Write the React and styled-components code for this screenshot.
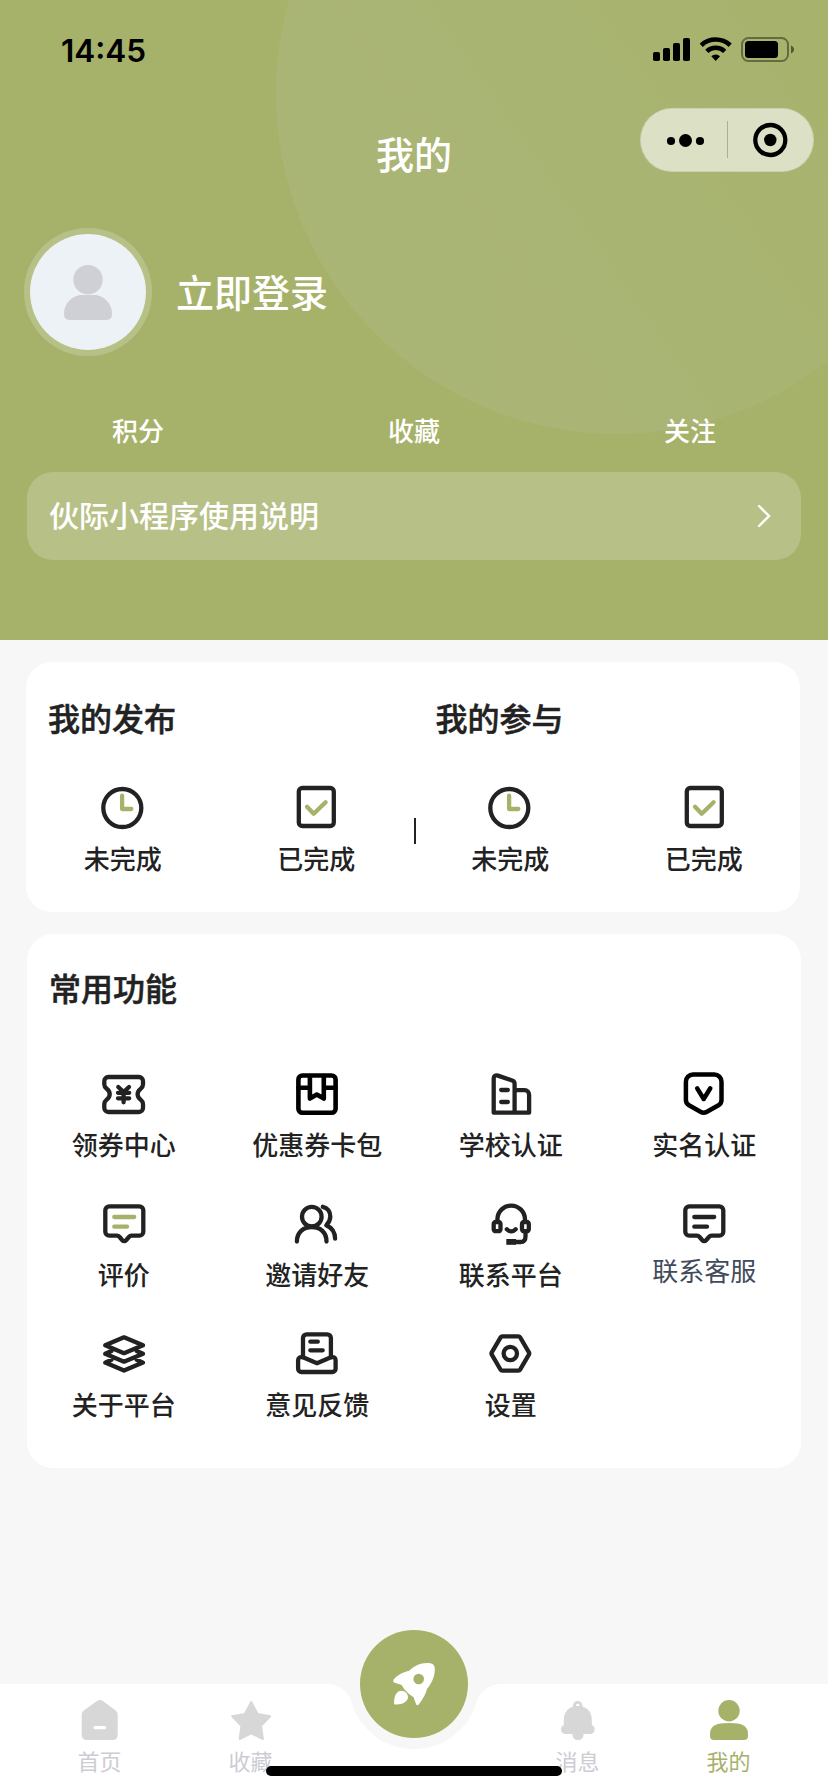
import React from 'react';
import styled, { createGlobalStyle } from 'styled-components';

const GREEN = '#a6b26a';
const INK = '#222222';

const GlobalStyle = createGlobalStyle`
  * {
    box-sizing: border-box;
  }
  body {
    margin: 0;
    background: #f7f7f7;
    font-family: 'Noto Sans CJK SC', 'Noto Sans', sans-serif;
  }
  svg {
    display: block;
  }
`;

const Page = styled.div`
  position: relative;
  width: 828px;
  height: 1792px;
  display: flex;
  flex-direction: column;
  overflow: hidden;
  background: #f7f7f7;
`;

const Header = styled.header`
  position: relative;
  height: 640px;
  flex: none;
  overflow: hidden;
  background: ${GREEN};
  color: #ffffff;
`;

const Halo = styled.div`
  position: absolute;
  left: 276px;
  top: -248px;
  width: 682px;
  height: 682px;
  border-radius: 50%;
  background: linear-gradient(55deg, rgba(180, 190, 150, 0.26) 30%, rgba(180, 190, 150, 0) 82%);
`;

const HeaderContent = styled.div`
  position: relative;
`;

const StatusBar = styled.div`
  height: 108px;
  display: flex;
  justify-content: space-between;
  padding: 30px 34px 0 61px;
`;

const Clock = styled.span`
  font-family: Inter, sans-serif;
  font-size: 31.5px;
  font-weight: 600;
  line-height: 41px;
  color: #000000;
`;

const StatusIcons = styled.div`
  display: flex;
  padding-top: 6px;
`;

const NavBar = styled.div`
  height: 88px;
  display: grid;
  grid-template-columns: 1fr auto 1fr;
  padding: 0 14px;
`;

const NavTitle = styled.h1`
  grid-column: 2;
  margin: 0;
  font-size: 38px;
  font-weight: 500;
  line-height: 89px;
`;

const Capsule = styled.div`
  justify-self: end;
  width: 174px;
  height: 64px;
  border: 1px solid rgba(190, 200, 160, 0.6);
  border-radius: 32px;
  background: rgba(255, 255, 255, 0.6);
`;

const Profile = styled.div`
  display: flex;
  align-items: center;
  gap: 24px;
  margin-top: 32px;
  padding-left: 24px;
`;

const Avatar = styled.div`
  width: 128px;
  height: 128px;
  border: 6px solid rgba(255, 255, 255, 0.2);
  border-radius: 50%;
  background: #edf2f7;
  background-clip: padding-box;
`;

const LoginText = styled.span`
  font-size: 38px;
  font-weight: 500;
  line-height: 56px;
  padding-bottom: 3px;
`;

const Stats = styled.div`
  display: grid;
  grid-template-columns: repeat(3, 1fr);
  margin: 56px 0 24px;
`;

const Stat = styled.span`
  font-size: 26px;
  font-weight: 500;
  line-height: 36px;
  text-align: center;
`;

const Banner = styled.div`
  display: flex;
  align-items: center;
  justify-content: space-between;
  height: 88px;
  margin: 0 27px;
  padding: 0 30px 0 22px;
  border-radius: 26px;
  background: rgba(255, 255, 255, 0.2);
  font-size: 30px;
  font-weight: 500;
`;

const BannerText = styled.span`
  line-height: 40px;
  padding-bottom: 4px;
`;

const Card = styled.section`
  flex: none;
  width: 774px;
  border-radius: 26px;
  background: #ffffff;
`;

const OrdersCard = styled(Card)`
  display: flex;
  height: 250px;
  margin: 22px 0 0 26px;
`;

const OrdersGroup = styled.div`
  flex: 0 0 387.5px;
  padding-top: 33px;
`;

const Divider = styled.div`
  flex: none;
  width: 2.5px;
  height: 26px;
  margin: 156px -2.5px 0 0;
  background: #222222;
`;

const FeaturesCard = styled(Card)`
  height: 534px;
  margin: 22px 0 0 27px;
  padding-top: 31px;
`;

const CardTitle = styled.h2`
  margin: 0 0 ${(props) => props.$gap}px;
  padding-left: 22px;
  font-size: 32px;
  font-weight: 500;
  line-height: 44px;
  color: ${INK};
  -webkit-text-stroke: 0.5px ${INK};
`;

const EntryGrid = styled.div`
  display: grid;
  grid-template-columns: repeat(${(props) => props.$columns}, 193.5px);
  grid-auto-rows: 130px;
`;

const Entry = styled.div`
  display: flex;
  flex-direction: column;
  align-items: center;
`;

const EntryLabel = styled.span`
  margin-top: ${(props) => (props.$plain ? 4 : 8)}px;
  font-size: 26px;
  font-weight: ${(props) => (props.$plain ? 400 : 500)};
  line-height: 36px;
  color: ${(props) => (props.$plain ? '#414b5c' : INK)};
`;

const TabBar = styled.nav`
  position: relative;
  display: flex;
  justify-content: space-between;
  height: 108px;
  margin-top: auto;
  padding: 14px 24px 0;

  &::before {
    content: '';
    position: absolute;
    inset: 0;
    background: #ffffff;
    clip-path: path('M0 0H327A25.7 25.7 0 0 1 351.6 18.4A65 65 0 0 0 476.4 18.4A25.7 25.7 0 0 1 501 0H828V108H0Z');
  }
`;

const TabGroup = styled.div`
  position: relative;
  display: flex;
`;

const Tab = styled.div`
  display: flex;
  flex-direction: column;
  align-items: center;
  gap: 3px;
  width: 151px;
  font-size: 22px;
  line-height: 30px;
  color: ${(props) => (props.$active ? GREEN : '#cbccd4')};
`;

const PublishButton = styled.button`
  position: absolute;
  left: 360px;
  top: -54px;
  width: 108px;
  height: 108px;
  padding: 30px;
  border: none;
  border-radius: 50%;
  background: ${GREEN};
`;

const HomeIndicator = styled.div`
  position: absolute;
  left: 266px;
  bottom: 16px;
  width: 296px;
  height: 10px;
  border-radius: 5px;
  background: #000000;
`;

const LineIcon = ({ color = INK, width = 4.3, children }) => (
  <svg
    width="48"
    height="48"
    viewBox="0 0 48 48"
    fill="none"
    stroke={color}
    strokeWidth={width}
    strokeLinecap="round"
    strokeLinejoin="round"
  >
    {children}
  </svg>
);

const ClockIcon = () => (
  <LineIcon>
    <circle cx="23.3" cy="24" r="19" />
    <path d="M23.100 11.700V25H32.300" stroke={GREEN} />
  </LineIcon>
);

const DoneIcon = () => (
  <LineIcon>
    <rect x="6.800" y="4" width="35" height="38" rx="3.500" />
    <path d="M15 22.700L21.700 29.800L33.600 18.200" stroke={GREEN} />
  </LineIcon>
);

const CouponIcon = () => (
  <LineIcon>
    <path d="M8.300 7H39a4 4 0 0 1 4 4v3.500c0 2-.8 3-2.400 4.300C38.600 20.400 37.600 22 37.600 24.200s1 3.800 3 5.400c1.600 1.300 2.400 2.300 2.400 4.300V38a4 4 0 0 1-4 4H8.300a4 4 0 0 1-4-4v-4.100c0-2 .8-3 2.400-4.300c2-1.600 3-3.200 3-5.400s-1-3.800-3-5.400C5.100 17.500 4.300 16.500 4.300 14.500V11a4 4 0 0 1 4-4z" />
    <path d="M18.300 17L23.700 22L29 17M18 22.800H29.200M18 28.300H29.200M23.600 22V32.300" />
  </LineIcon>
);

const WalletIcon = () => (
  <LineIcon color="#000000" width={4.600}>
    <rect x="5.400" y="5.500" width="37.200" height="37.200" rx="4" />
    <path d="M16.900 6V28.600L23.800 24.600L30.800 28.600V6M5.400 17.700H16.900M30.800 17.700H42.600" />
  </LineIcon>
);

const SchoolIcon = () => (
  <LineIcon>
    <path d="M6.700 42.700V8.500c0-2.500 1.900-3.700 4.200-2.900L25.200 10.500c1.700.6 2.400 1.600 2.400 3.300V42.700M27.600 20.200H37.600a4.500 4.500 0 0 1 4.500 4.500V42.700H6.700" />
    <path d="M14.200 20H20.800M14.200 32H20.800" />
  </LineIcon>
);

const ShieldIcon = () => (
  <LineIcon color="#000000" width={4.500}>
    <path d="M13 4.500H34.300a7.200 7.200 0 0 1 7.200 7.200V30c0 2.500-1 4.100-3 5.300L26.500 42q-2.800 1.600-5.600 0L9 35.300c-2-1.200-3.100-2.800-3.100-5.300V11.700A7.200 7.200 0 0 1 13 4.500z" />
    <path d="M17.200 18.300L23.700 29L30.300 18.300" />
  </LineIcon>
);

const ChatIcon = ({ lines = INK }) => (
  <LineIcon>
    <path d="M9.300 6.300H39.300a4 4 0 0 1 4 4V31.700a4 4 0 0 1-4 4H31.500c-1.200 0-1.800.4-2.600 1.300L26.300 40q-2.100 2.300-4.200 0L19.600 37c-.8-.9-1.400-1.300-2.600-1.300H9.300a4 4 0 0 1-4-4V10.300a4 4 0 0 1 4-4z" />
    <path d="M14.300 17H34.200M14.300 26.700H27" stroke={lines} />
  </LineIcon>
);

const FriendsIcon = () => (
  <LineIcon>
    <circle cx="18.800" cy="16.700" r="9.800" />
    <path d="M3.900 41.500C3.900 32.600 10.300 27 18.800 27S33.500 32.600 33.500 41.500" />
    <path d="M29.800 6.800C34.800 7.800 37.300 12 37.300 16.500C37.300 20.300 35.600 23 33.300 25.200C39 27.600 42 32.500 42.100 38.700" />
  </LineIcon>
);

const HeadsetIcon = () => (
  <LineIcon>
    <path d="M10.400 21V19.400a13.800 13.800 0 0 1 27.600 0V21" />
    <rect x="6.700" y="22" width="6.800" height="9.200" rx="2" />
    <rect x="35" y="22" width="6.800" height="9.200" rx="2" />
    <path d="M19.800 29.200Q24.200 33.700 28.700 29.200M38.500 32V36.500Q38.500 42 33.500 42H27" />
    <rect x="19.300" y="39" width="9.700" height="5.800" fill={INK} stroke="none" />
  </LineIcon>
);

const LayersIcon = () => (
  <LineIcon>
    <path d="M24 7.300L43 15.300L24 23.200L5.200 15.300Z" />
    <path d="M11.500 21L5.200 23.800L24 31.700L43 23.800L36.700 21M11.500 29.800L5.200 32.600L24 40.600L43 32.600L36.700 29.800" />
  </LineIcon>
);

const FeedbackIcon = () => (
  <LineIcon>
    <path d="M10 27V8a3.700 3.700 0 0 1 3.700-3.700H34.200A3.700 3.700 0 0 1 37.900 8V27" />
    <path d="M10 27.300L24 33.200L37.900 27.300c3-.8 4.700.3 4.700 3V38.700a3.300 3.300 0 0 1-3.300 3.300H8.400a3.300 3.300 0 0 1-3.300-3.300V30.300c0-2.700 1.900-3.800 4.900-3z" />
    <path d="M17.300 11.700H24.800M17.300 20.300H29.700" />
  </LineIcon>
);

const SettingsIcon = () => (
  <LineIcon>
    <path d="M15.500 6.300H31.200c.9 0 1.500.3 1.900 1L41.900 22.300c.5.900.5 1.500 0 2.400L33.100 39.700c-.4.700-1 1-1.900 1H15.500c-.9 0-1.500-.3-1.900-1L4.800 24.700c-.5-.9-.5-1.500 0-2.400L13.600 7.300c.4-.7 1-1 1.900-1z" />
    <circle cx="23.300" cy="23.500" r="6.700" />
  </LineIcon>
);

const SignalIcon = () => (
  <svg width="47" height="28" viewBox="0 0 47 28">
    <rect x="0" y="16" width="7" height="9" rx="1.800" />
    <rect x="10" y="12" width="7" height="13" rx="1.800" />
    <rect x="20" y="7" width="7" height="18" rx="1.800" />
    <rect x="30" y="2" width="7" height="23" rx="1.800" />
  </svg>
);

const WifiIcon = () => (
  <svg width="41" height="28" viewBox="0 0 41 28" fill="none" stroke="#000000" strokeWidth="4.600">
    <path d="M1.200 9.200A21.300 21.300 0 0 1 30.200 9.200" />
    <path d="M6.800 15.300A13 13 0 0 1 24.700 15.300" />
    <path d="M11.300 20.200A6.600 6.600 0 0 1 20.100 20.200L15.700 25Z" fill="#000000" stroke="none" />
  </svg>
);

const BatteryIcon = () => (
  <svg width="53" height="28" viewBox="0 0 53 28">
    <rect x="1" y="2" width="46" height="23" rx="6.500" fill="none" stroke="#000000" strokeOpacity="0.4" strokeWidth="2" />
    <rect x="4" y="5" width="33" height="17" rx="3.500" />
    <path d="M50 9.500C54 11 54 16 50 17.500Z" fillOpacity="0.5" />
  </svg>
);

const CapsuleIcons = () => (
  <svg width="172" height="62" viewBox="0 0 172 62">
    <circle cx="30" cy="32" r="4.100" />
    <circle cx="44.500" cy="31.500" r="6.500" />
    <circle cx="59" cy="32" r="4.100" />
    <path d="M86.500 12V49" stroke="#a9b08c" />
    <circle cx="129.300" cy="31" r="15" fill="none" stroke="#000000" strokeWidth="4.300" />
    <circle cx="129.300" cy="31" r="6.200" />
  </svg>
);

const AvatarIcon = () => (
  <svg width="116" height="116" viewBox="0 0 116 116" fill="#cfd0d5">
    <circle cx="58" cy="45.700" r="14.700" />
    <path d="M34 80C34 68 44 61 52 61H64C72 61 82 68 82 80Q82 86 76 86H40Q34 86 34 80Z" />
  </svg>
);

const ChevronIcon = () => (
  <svg width="14" height="24" viewBox="0 0 14 24" fill="none" stroke="#ffffff" strokeWidth="2.400" strokeLinecap="round">
    <path d="M2 2L12 12L2 22" />
  </svg>
);

const TabIcon = ({ fill = '#d7d7d7', children }) => (
  <svg width="44" height="44" viewBox="0 0 44 44" fill={fill}>
    {children}
  </svg>
);

const HomeIcon = () => (
  <TabIcon>
    <path d="M19.300 2.800Q22 1 24.500 2.800L38 12.800Q39.700 14.200 39.700 16.500V36.500Q39.700 42 34.500 42H9Q3.700 42 3.700 36.500V16.500Q3.700 14.200 5.500 12.800Z" />
    <rect x="15.500" y="28" width="12.500" height="3.300" rx="1.400" fill="#ffffff" />
  </TabIcon>
);

const StarIcon = () => (
  <TabIcon>
    <path
      d="M22.200 4L28.600 16L41.200 18.300L32 27.900L33.900 41L22.200 35.300L10.700 41L12.400 27.900L3.200 18.300L15.900 16Z"
      stroke="#d7d7d7"
      strokeWidth="2"
      strokeLinejoin="round"
    />
  </TabIcon>
);

const BellIcon = () => (
  <TabIcon>
    <path d="M17 8.500C16.500 1 27 1 26.500 8.500C33 10.500 35.800 15.500 35.800 22V27.300C40 28 39.500 36 34.500 36H27.500C28 44 16 44 16.500 36H9.300C4 36 3.800 28 7.800 27.300V22C7.800 15.500 11 10.500 17 8.500Z" />
    <path d="M20 8.100Q20 5.800 21.800 5.800T23.600 8.100Z" fill="#ffffff" />
  </TabIcon>
);

const UserIcon = () => (
  <TabIcon fill={GREEN}>
    <circle cx="22" cy="12.700" r="10.700" />
    <path d="M3 36C3 28 8.500 25 22 25S41 28 41 36V38Q41 42 37 42H7Q3 42 3 38Z" />
  </TabIcon>
);

const RocketIcon = () => (
  <svg width="48" height="48" viewBox="0 0 48 48" fill="#ffffff">
    <path d="M3.500 19.800C6 16.500 11 12.500 19.200 10.800C23.500 6 31 2.400 39 3Q44 3.300 44.700 7.500C45.600 15 41.500 24 36.900 29C36 34 32 40.500 28.900 44.300Q27 46.300 26 44L23.500 37C19 34.500 14 29.500 11.700 24.900L4 22.500Q2.500 21.400 3.500 19.800Z" />
    <circle cx="28.700" cy="19" r="5.300" fill={GREEN} />
    <path d="M4.200 44.300C3.600 38 5.500 30.700 11.500 30.700C15 30.700 18.200 34 18 37.300C17.700 42.700 10.500 45.300 4.200 44.300Z" />
  </svg>
);

const orders = [
  { Icon: ClockIcon, label: '未完成' },
  { Icon: DoneIcon, label: '已完成' },
];

const features = [
  { Icon: CouponIcon, label: '领券中心' },
  { Icon: WalletIcon, label: '优惠券卡包' },
  { Icon: SchoolIcon, label: '学校认证' },
  { Icon: ShieldIcon, label: '实名认证' },
  { Icon: () => <ChatIcon lines={GREEN} />, label: '评价' },
  { Icon: FriendsIcon, label: '邀请好友' },
  { Icon: HeadsetIcon, label: '联系平台' },
  { Icon: ChatIcon, label: '联系客服', plain: true },
  { Icon: LayersIcon, label: '关于平台' },
  { Icon: FeedbackIcon, label: '意见反馈' },
  { Icon: SettingsIcon, label: '设置' },
];

const EntryList = ({ items, columns }) => (
  <EntryGrid $columns={columns}>
    {items.map(({ Icon, label, plain }) => (
      <Entry key={label}>
        <Icon />
        <EntryLabel $plain={plain}>{label}</EntryLabel>
      </Entry>
    ))}
  </EntryGrid>
);

const Orders = ({ title }) => (
  <OrdersGroup>
    <CardTitle $gap={45}>{title}</CardTitle>
    <EntryList items={orders} columns={2} />
  </OrdersGroup>
);

const App = () => {
  return (
    <Page>
      <GlobalStyle />
      <Header>
        <Halo />
        <HeaderContent>
          <StatusBar>
            <Clock>14:45</Clock>
            <StatusIcons>
              <SignalIcon />
              <WifiIcon />
              <BatteryIcon />
            </StatusIcons>
          </StatusBar>
          <NavBar>
            <NavTitle>我的</NavTitle>
            <Capsule><CapsuleIcons /></Capsule>
          </NavBar>
          <Profile>
            <Avatar><AvatarIcon /></Avatar>
            <LoginText>立即登录</LoginText>
          </Profile>
          <Stats>
            <Stat>积分</Stat>
            <Stat>收藏</Stat>
            <Stat>关注</Stat>
          </Stats>
          <Banner>
            <BannerText>伙际小程序使用说明</BannerText>
            <ChevronIcon />
          </Banner>
        </HeaderContent>
      </Header>
      <OrdersCard>
        <Orders title="我的发布" />
        <Divider />
        <Orders title="我的参与" />
      </OrdersCard>
      <FeaturesCard>
        <CardTitle $gap={61}>常用功能</CardTitle>
        <EntryList items={features} columns={4} />
      </FeaturesCard>
      <TabBar>
        <TabGroup>
          <Tab><HomeIcon />首页</Tab>
          <Tab><StarIcon />收藏</Tab>
        </TabGroup>
        <PublishButton><RocketIcon /></PublishButton>
        <TabGroup>
          <Tab><BellIcon />消息</Tab>
          <Tab $active><UserIcon />我的</Tab>
        </TabGroup>
      </TabBar>
      <HomeIndicator />
    </Page>
  )
};

export default App;
